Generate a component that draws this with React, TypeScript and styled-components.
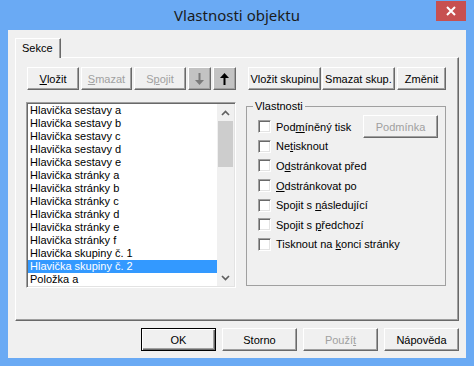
import React from 'react';
import styled, { createGlobalStyle, css } from 'styled-components';

const GlobalStyle = createGlobalStyle`
  body {
    margin: 0;
    font-family: 'Liberation Sans', Arial, sans-serif;
    font-size: 11px;
  }
`;

const Frame = styled.div`
  width: 474px;
  height: 366px;
  box-sizing: border-box;
  background: #6aaaf4;
  padding: 0 8px 8px;
  display: flex;
  flex-direction: column;
`;

const TitleBar = styled.div`
  height: 30px;
  margin: 0 -8px;
  display: grid;
  grid-template-columns: 1fr auto 1fr;
  align-items: start;
`;

const Title = styled.div`
  grid-column: 2;
  font-family: 'Noto Sans', 'Open Sans', sans-serif;
  font-size: 15px;
  line-height: 30px;
  color: #1b1b1b;
`;

const CloseBtn = styled.div`
  grid-column: 3;
  justify-self: end;
  margin: 1px 8px 0 0;
  width: 30px;
  height: 20px;
  background: #c75050;
  display: flex;
  align-items: center;
  justify-content: center;
`;

const Client = styled.div`
  flex: 1;
  background: #f0f0f0;
  padding: 8px 7px 7px;
  display: flex;
  flex-direction: column;
`;

const TabStrip = styled.div`
  height: 19px;
  display: flex;
`;

const Tab = styled.div`
  position: relative;
  z-index: 1;
  width: 46px;
  height: 20px;
  box-sizing: border-box;
  background: #f0f0f0;
  border-top: 1px solid #fff;
  border-left: 1px solid #fff;
  border-right: 1px solid #696969;
  box-shadow: inset -1px 0 #a0a0a0;
  padding-left: 6px;
  line-height: 18px;
  color: #000;
`;

const Panel = styled.div`
  height: 264px;
  box-sizing: border-box;
  border: 1px solid;
  border-color: #fff #696969 #696969 #fff;
  box-shadow: inset -1px -1px #a0a0a0;
  padding: 9px 0 0 10px;
  display: flex;
  gap: 10px;
`;

const Column = styled.div<{ $w: number }>`
  width: ${p => p.$w}px;
  display: flex;
  flex-direction: column;
`;

const BtnRow = styled.div<{ $indent: number }>`
  display: flex;
  gap: 2px;
  margin-left: ${p => p.$indent}px;
`;

const raised = css`
  border: 1px solid;
  border-color: #fff #696969 #696969 #fff;
  box-shadow: inset -1px -1px #a0a0a0;
`;

const Btn = styled.div<{ $w: number; $off?: boolean; $default?: boolean; $face?: string; $ml?: number }>`
  width: ${p => p.$w}px;
  height: 23px;
  margin-left: ${p => p.$ml || 0}px;
  box-sizing: border-box;
  background: ${p => p.$face || '#f0f0f0'};
  display: flex;
  align-items: center;
  justify-content: center;
  font-size: 11px;
  color: ${p => (p.$off ? '#a0a0a0' : '#000')};
  white-space: nowrap;
  ${p =>
    p.$default
      ? css`
          border: 1px solid #000;
          box-shadow: inset 1px 1px #fff, inset -1px -1px #696969, inset -2px -2px #a0a0a0;
        `
      : raised}
`;

const ListBox = styled.div`
  margin-top: 12px;
  height: 186px;
  box-sizing: border-box;
  border: 1px solid;
  border-color: #a0a0a0 #fff #fff #a0a0a0;
  box-shadow: inset 1px 1px #696969, inset -1px -1px #e3e3e3;
  padding: 1px;
  background: #fff;
  display: flex;
`;

const Items = styled.div`
  flex: 1;
  display: flex;
  flex-direction: column;
`;

const Item = styled.div<{ $sel?: boolean }>`
  height: 13px;
  line-height: 13px;
  padding-left: 2px;
  color: ${p => (p.$sel ? '#fff' : '#000')};
  background: ${p => (p.$sel ? '#3399ff' : 'transparent')};
  white-space: nowrap;
`;

const ScrollBar = styled.div`
  width: 17px;
  background: #f0f0f0;
  display: flex;
  flex-direction: column;
`;

const ScrollArrow = styled.div`
  height: 17px;
  display: flex;
  align-items: center;
  justify-content: center;
`;

const Thumb = styled.div`
  height: 46px;
  margin: 0 1px;
  background: #cdcdcd;
`;

const Track = styled.div`
  flex: 1;
`;

const Group = styled.fieldset`
  margin: 10px 0 0;
  height: 186px;
  box-sizing: border-box;
  border: 1px solid #a0a0a0;
  padding: 4px 7px 0 6px;
  display: flex;
  flex-direction: column;
`;

const Legend = styled.legend`
  padding: 0 2px;
  line-height: 13px;
  color: #000;
`;

const CheckRow = styled.div`
  height: 19.6px;
  display: flex;
  align-items: center;
  margin-left: 5px;
  color: #000;
`;

const Box = styled.span`
  width: 13px;
  height: 13px;
  box-sizing: border-box;
  background: #fff;
  border: 1px solid;
  border-color: #a0a0a0 #fff #fff #a0a0a0;
  box-shadow: inset 1px 1px #696969, inset -1px -1px #e3e3e3;
  margin-right: 5px;
  flex: none;
`;

const Push = styled.div`
  margin-left: auto;
`;

const Footer = styled.div`
  margin-top: 7px;
  display: flex;
  justify-content: flex-end;
  gap: 6px;
`;

const Arrow = ({ up, color }: { up?: boolean; color: string }) => (
  <svg width="9" height="12" viewBox="0 0 9 12">
    {up ? (
      <>
        <polygon points="4.5,0 9,5 0,5" fill={color} />
        <rect x="3.5" y="5" width="2" height="7" fill={color} />
      </>
    ) : (
      <>
        <rect x="3.5" y="0" width="2" height="7" fill={color} />
        <polygon points="0,7 9,7 4.5,12" fill={color} />
      </>
    )}
  </svg>
);

const Chevron = ({ down }: { down?: boolean }) => (
  <svg width="9" height="6" viewBox="0 0 9 6">
    <polyline
      points={down ? '1,1 4.5,4.5 8,1' : '1,5 4.5,1.5 8,5'}
      fill="none"
      stroke="#606060"
      strokeWidth="1.7"
    />
  </svg>
);

const items = [
  'Hlavička sestavy a',
  'Hlavička sestavy b',
  'Hlavička sestavy c',
  'Hlavička sestavy d',
  'Hlavička sestavy e',
  'Hlavička stránky a',
  'Hlavička stránky b',
  'Hlavička stránky c',
  'Hlavička stránky d',
  'Hlavička stránky e',
  'Hlavička stránky f',
  'Hlavička skupiny č. 1',
  'Hlavička skupiny č. 2',
  'Položka a',
];

// [before, underlined, after]
const checks: [string, string, string][] = [
  ['Pod', 'm', 'íněný tisk'],
  ['Ne', 't', 'isknout'],
  ['O', 'd', 'stránkovat před'],
  ['', 'O', 'dstránkovat po'],
  ['Spojit s ', 'n', 'ásledující'],
  ['Spojit s ', 'p', 'ředchozí'],
  ['Tisknout na ', 'k', 'onci stránky'],
];

export default function App(): React.ReactElement {
  return (
    <>
      <GlobalStyle />
      <Frame>
        <TitleBar>
          <Title>Vlastnosti objektu</Title>
          <CloseBtn>
            <svg width="10" height="10" viewBox="0 0 10 10">
              <path d="M1 1 L9 9 M9 1 L1 9" stroke="#fff" strokeWidth="2" />
            </svg>
          </CloseBtn>
        </TitleBar>
        <Client>
          <TabStrip>
            <Tab>Sekce</Tab>
          </TabStrip>
          <Panel>
            <Column $w={210}>
              <BtnRow $indent={1}>
                <Btn $w={52}><span><u>V</u>ložit</span></Btn>
                <Btn $w={51} $off><span><u>S</u>mazat</span></Btn>
                <Btn $w={52} $off><span>S<u>p</u>ojit</span></Btn>
                <Btn $w={23} $face="#c3c3c3"><Arrow color="#7a7a7a" /></Btn>
                <Btn $w={23} $face="#c3c3c3"><Arrow up color="#000" /></Btn>
              </BtnRow>
              <ListBox>
                <Items>
                  {items.map((t, i) => (
                    <Item key={t} $sel={i === 12}>{t}</Item>
                  ))}
                </Items>
                <ScrollBar>
                  <ScrollArrow><Chevron /></ScrollArrow>
                  <Thumb />
                  <Track />
                  <ScrollArrow><Chevron down /></ScrollArrow>
                </ScrollBar>
              </ListBox>
            </Column>
            <Column $w={200}>
              <BtnRow $indent={2}>
                <Btn $w={73}>Vložit skupinu</Btn>
                <Btn $w={74} $ml={-1}>Smazat skup.</Btn>
                <Btn $w={49}>Změnit</Btn>
              </BtnRow>
              <Group>
                <Legend>Vlastnosti</Legend>
                {checks.map(([a, u, b], i) => (
                  <CheckRow key={i}>
                    <Box />
                    <span>{a}<u>{u}</u>{b}</span>
                    {i === 0 && (
                      <Push>
                        <Btn $w={75} $off>Podmínka</Btn>
                      </Push>
                    )}
                  </CheckRow>
                ))}
              </Group>
            </Column>
          </Panel>
          <Footer>
            <Btn $w={75} $default>OK</Btn>
            <Btn $w={75}>Storno</Btn>
            <Btn $w={75} $off><span>Použí<u>t</u></span></Btn>
            <Btn $w={75}>Nápověda</Btn>
          </Footer>
        </Client>
      </Frame>
    </>
  );
}
